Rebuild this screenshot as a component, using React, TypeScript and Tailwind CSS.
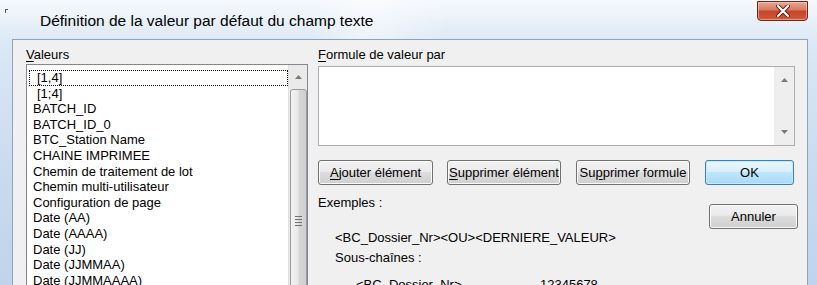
const items = [
  "[1,4]",
  "[1;4]",
  "BATCH_ID",
  "BATCH_ID_0",
  "BTC_Station Name",
  "CHAINE IMPRIMEE",
  "Chemin de traitement de lot",
  "Chemin multi-utilisateur",
  "Configuration de page",
  "Date (AA)",
  "Date (AAAA)",
  "Date (JJ)",
  "Date (JJMMAA)",
  "Date (JJMMAAAA)",
];

function Arrow({ up }: { up?: boolean }) {
  return (
    <svg width="7" height="4" viewBox="0 0 7 4" className="block">
      <polygon points={up ? "0,4 3.5,0 7,4" : "0,0 3.5,4 7,0"} fill="#7a7a7a" />
    </svg>
  );
}

function Btn({ children, w, primary }: { children: React.ReactNode; w: string; primary?: boolean }) {
  return (
    <div
      className={`${w} h-[25px] flex items-center justify-center rounded-[3px] border text-[13px] leading-none text-black whitespace-nowrap ${
        primary
          ? "border-[#3c7fb1] bg-[linear-gradient(#eaf6fd_0%,#d9f0fc_45%,#bee6fd_50%,#a7d9f5_100%)] shadow-[inset_0_0_0_1px_#c7e9fd]"
          : "border-[#707070] bg-[linear-gradient(#f2f2f2_0%,#ebebeb_45%,#dddddd_50%,#cfcfcf_100%)] shadow-[inset_0_0_0_1px_#fcfcfc]"
      }`}
    >
      {children}
    </div>
  );
}

export default function App() {
  return (
    <div className="w-[817px] h-[285px] overflow-hidden flex flex-col bg-[linear-gradient(#f6f9fc_0%,#dbe8f5_15%,#c9dbee_60%,#bfd4ea_100%)] font-['Liberation_Sans',Arial,sans-serif]">
      {/* title bar */}
      <div className="relative h-[39px] shrink-0 bg-[linear-gradient(100deg,transparent_0%,transparent_38%,rgba(255,255,255,0.45)_45%,transparent_55%,transparent_100%)]">
        <div className="absolute left-[5px] top-[9px] w-[3px] h-[4px] border-l border-t border-[#555]" />
        <div className="pl-[40px] pt-[13px] text-[15.5px] leading-[16px] text-black">
          Définition de la valeur par défaut du champ texte
        </div>
        <div className="absolute left-[757px] top-[1px] w-[51px] h-[20px] rounded-b-[4px] border border-[#6b2418] bg-[linear-gradient(#e9a894_0%,#d8785f_45%,#c4452a_50%,#d2593b_100%)] shadow-[inset_0_0_0_1px_rgba(255,220,210,0.5)] flex items-center justify-center">
          <svg width="14" height="12" viewBox="0 0 14 12">
            <path d="M2 1 L12 11 M12 1 L2 11" stroke="#5a1a10" strokeWidth="4" strokeLinecap="round" />
            <path d="M2 1 L12 11 M12 1 L2 11" stroke="#ffffff" strokeWidth="2.2" strokeLinecap="round" />
          </svg>
        </div>
      </div>

      {/* client area */}
      <div className="flex-1 ml-[12px] mr-[9px] border-l border-t border-r border-[#8fa3b8] bg-[#f0f0f0] flex text-[13px] leading-[15px] text-black">
        {/* left */}
        <div className="pl-[13px] pt-[7px] w-[296px] shrink-0">
          <div className="h-[17px]">
            <span className="underline underline-offset-2">V</span>aleurs
          </div>
          <div className="w-[282px] h-[240px] border border-[#828790] bg-white flex">
            <div className="flex-1 pt-[5px] pl-[2px]">
              {items.map((t, i) => (
                <div
                  key={t}
                  className={`h-[15.6px] leading-[15.6px] whitespace-nowrap ${i < 2 ? "pl-[8px]" : "pl-[4px]"} ${
                    i === 0 ? "outline outline-1 outline-dotted outline-black -outline-offset-1" : ""
                  }`}
                >
                  {t}
                </div>
              ))}
            </div>
            <div className="w-[19px] shrink-0 bg-[#eaeaea] border-l border-[#e0e0e0] flex flex-col items-center">
              <div className="h-[24px] flex items-center justify-center">
                <Arrow up />
              </div>
              <div className="w-[17px] flex-1 rounded-t-[3px] border border-[#9a9a9a] bg-[linear-gradient(90deg,#f4f4f4_0%,#e9e9e9_45%,#d6d6d6_55%,#cfcfcf_100%)] flex flex-col items-center pt-[126px] gap-[2px]">
                <div className="w-[7px] h-[1px] bg-[#6f6f6f]" />
                <div className="w-[7px] h-[1px] bg-[#6f6f6f]" />
                <div className="w-[7px] h-[1px] bg-[#6f6f6f]" />
                <div className="w-[7px] h-[1px] bg-[#6f6f6f]" />
              </div>
            </div>
          </div>
        </div>

        {/* right */}
        <div className="pl-[9px] pt-[7px] w-[489px] shrink-0">
          <div className="h-[19px]">
            <span className="underline underline-offset-2">F</span>ormule de valeur par
          </div>
          <div className="w-[477px] h-[80px] border border-[#abadb3] bg-white flex">
            <div className="flex-1" />
            <div className="w-[20px] bg-[#eeeeee] flex flex-col items-center justify-between py-[11px]">
              <Arrow up />
              <Arrow />
            </div>
          </div>
          <div className="flex mt-[14px]">
            <Btn w="w-[115px]">
              <span className="underline underline-offset-2">A</span>jouter élément
            </Btn>
            <div className="w-[14px]" />
            <Btn w="w-[114px]">
              <span className="underline underline-offset-2">S</span>upprimer élément
            </Btn>
            <div className="w-[15px]" />
            <Btn w="w-[114px]">
              Su<span className="underline underline-offset-2">p</span>primer formule
            </Btn>
            <div className="w-[15px]" />
            <Btn w="w-[89px]" primary>
              OK
            </Btn>
          </div>
          <div className="flex">
            <div className="flex-1 pt-[10px]">
              <div>Exemples :</div>
              <div className="pl-[17px] mt-[20px]">&lt;BC_Dossier_Nr&gt;&lt;OU&gt;&lt;DERNIERE_VALEUR&gt;</div>
              <div className="pl-[17px] mt-[5px]">Sous-chaînes :</div>
              <div className="flex mt-[12px]">
                <div className="pl-[38px] w-[222px]">&lt;BC_Dossier_Nr&gt;</div>
                <div>12345678</div>
              </div>
            </div>
            <div className="pt-[19px]">
              <Btn w="w-[89px]">Annuler</Btn>
            </div>
          </div>
        </div>
      </div>
    </div>
  );
}
